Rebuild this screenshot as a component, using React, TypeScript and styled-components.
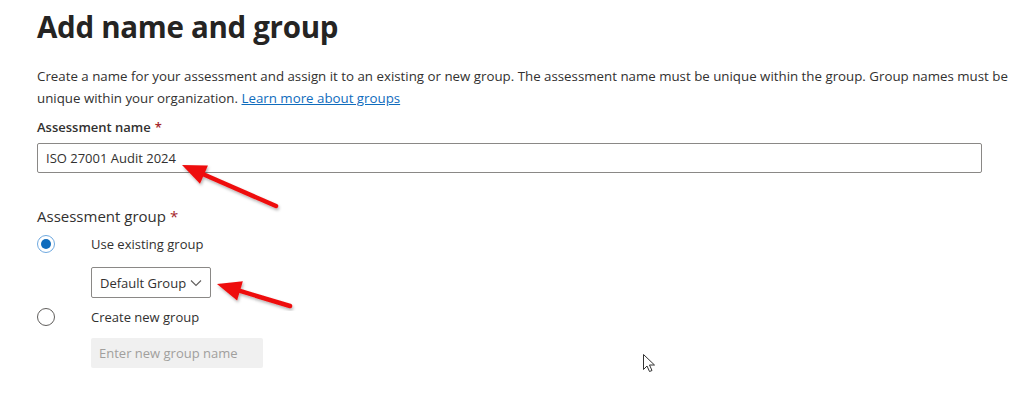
import React from 'react'
import styled, { createGlobalStyle } from 'styled-components'

const GlobalStyle = createGlobalStyle`
    html, body {
        margin: 0;
        padding: 0;
        background: #ffffff;
    }
    body {
        font-family: "Open Sans", "Noto Sans", sans-serif;
        color: #323130;
    }
`

const Page = styled.div`
    position: relative;
    width: 1024px;
    height: 394px;
    overflow: hidden;
    padding: 0 42px 0 37px;
    box-sizing: border-box;
`

const Title = styled.h1`
    margin: 0;
    padding-top: 6px;
    font-size: 29.5px;
    line-height: 42px;
    font-weight: 700;
    color: #252423;
    letter-spacing: -0.3px;
`

const Intro = styled.p`
    margin: 17px -40px 0 0;
    font-size: 13.3px;
    line-height: 22px;
    color: #323130;
`

const Link = styled.a`
    color: #0f6cbd;
    text-decoration: underline;
`

const Label = styled.div<{ $big?: boolean }>`
    margin-top: ${({ $big }) => ($big ? '32px' : '7px')};
    font-size: ${({ $big }) => ($big ? '15px' : '13px')};
    font-weight: ${({ $big }) => ($big ? 400 : 600)};
    line-height: 22px;
    color: #323130;
`

const Required = styled.span`
    color: #a4262c;
    margin-left: 4px;
`

const TextInput = styled.div`
    margin-top: 5px;
    height: 30px;
    border: 1px solid #8a8886;
    border-radius: 2px;
    box-sizing: border-box;
    display: flex;
    align-items: center;
    padding: 0 8px;
    font-size: 13px;
    color: #323130;
`

const Options = styled.div`
    margin-top: 4px;
    display: flex;
    flex-direction: column;
`

const OptionRow = styled.div`
    display: flex;
    align-items: center;
    height: 26px;
`

const Radio = styled.span<{ $checked?: boolean }>`
    width: 18px;
    height: 18px;
    border-radius: 50%;
    box-sizing: border-box;
    border: 1px solid ${({ $checked }) => ($checked ? '#6fa9e0' : '#605e5c')};
    display: flex;
    align-items: center;
    justify-content: center;
    margin-right: 36px;

    &::after {
        content: '';
        width: 10px;
        height: 10px;
        border-radius: 50%;
        background: #0f6cbd;
        display: ${({ $checked }) => ($checked ? 'block' : 'none')};
    }
`

const OptionText = styled.span`
    font-size: 13px;
    color: #323130;
`

const Nested = styled.div<{ $last?: boolean }>`
    padding-left: 54px;
    margin: ${({ $last }) => ($last ? '8px 0 0' : '10px 0 6px')};
`

const Dropdown = styled.div`
    width: 120px;
    height: 31px;
    border: 1px solid #8a8886;
    border-radius: 2px;
    box-sizing: border-box;
    display: flex;
    align-items: center;
    justify-content: space-between;
    padding: 0 8px 0 8px;
    font-size: 13px;
    white-space: nowrap;
    color: #323130;
`

const DisabledInput = styled.div`
    width: 172px;
    height: 30px;
    background: #f0f0f0;
    border-radius: 2px;
    display: flex;
    align-items: center;
    padding: 0 8px;
    box-sizing: border-box;
    font-size: 13px;
    color: #a19f9d;
`

const Overlay = styled.svg`
    position: absolute;
    left: 0;
    top: 0;
    pointer-events: none;
`

const Chevron = () => (
    <svg width="12" height="8" viewBox="0 0 12 8">
        <path d="M1 1.5 L6 6.5 L11 1.5" fill="none" stroke="#605e5c" strokeWidth="1.1" />
    </svg>
)

const Arrow = ({ x1, y1, x2, y2 }: { x1: number; y1: number; x2: number; y2: number }) => {
    const dx = x2 - x1
    const dy = y2 - y1
    const len = Math.sqrt(dx * dx + dy * dy)
    const ux = dx / len
    const uy = dy / len
    const headLen = 24
    const headW = 10
    const bx = x2 - ux * headLen
    const by = y2 - uy * headLen
    const px = -uy
    const py = ux
    const head = `${x2},${y2} ${bx + px * headW},${by + py * headW} ${bx - px * headW},${by - py * headW}`
    return (
        <g filter="url(#shadow)">
            <line x1={x1} y1={y1} x2={x2 - ux * 12} y2={y2 - uy * 12} stroke="#ee1111" strokeWidth="4.5" strokeLinecap="round" />
            <polygon points={head} fill="#ee1111" />
        </g>
    )
}

export const App: React.FC = () => {
    return (
        <>
            <GlobalStyle />
            <Page>
                <Title>Add name and group</Title>
                <Intro>
                    Create a name for your assessment and assign it to an existing or new group. The assessment name must be unique within the group. Group names must be unique within your organization.{' '}
                    <Link href="#">Learn more about groups</Link>
                </Intro>
                <Label>
                    Assessment name<Required>*</Required>
                </Label>
                <TextInput>ISO 27001 Audit 2024</TextInput>
                <Label $big>
                    Assessment group<Required>*</Required>
                </Label>
                <Options>
                    <OptionRow>
                        <Radio $checked />
                        <OptionText>Use existing group</OptionText>
                    </OptionRow>
                    <Nested>
                        <Dropdown>
                            Default Group
                            <Chevron />
                        </Dropdown>
                    </Nested>
                    <OptionRow>
                        <Radio />
                        <OptionText>Create new group</OptionText>
                    </OptionRow>
                    <Nested $last>
                        <DisabledInput>Enter new group name</DisabledInput>
                    </Nested>
                </Options>

                <Overlay width="1024" height="394">
                    <defs>
                        <filter id="shadow" x="-20%" y="-20%" width="140%" height="140%">
                            <feDropShadow dx="1" dy="2" stdDeviation="1.5" floodColor="#000" floodOpacity="0.3" />
                        </filter>
                    </defs>
                    <Arrow x1={276} y1={206} x2={182} y2={165} />
                    <Arrow x1={290} y1={306} x2={217} y2={284} />
                    <path
                        d="M643.5 354.5 L643.5 369.5 L647 366 L649.5 371.5 L652 370.5 L649.5 365 L654.5 365 Z"
                        fill="#ffffff"
                        stroke="#333"
                        strokeWidth="1"
                        strokeLinejoin="round"
                    />
                </Overlay>
            </Page>
        </>
    )
}

export default App
